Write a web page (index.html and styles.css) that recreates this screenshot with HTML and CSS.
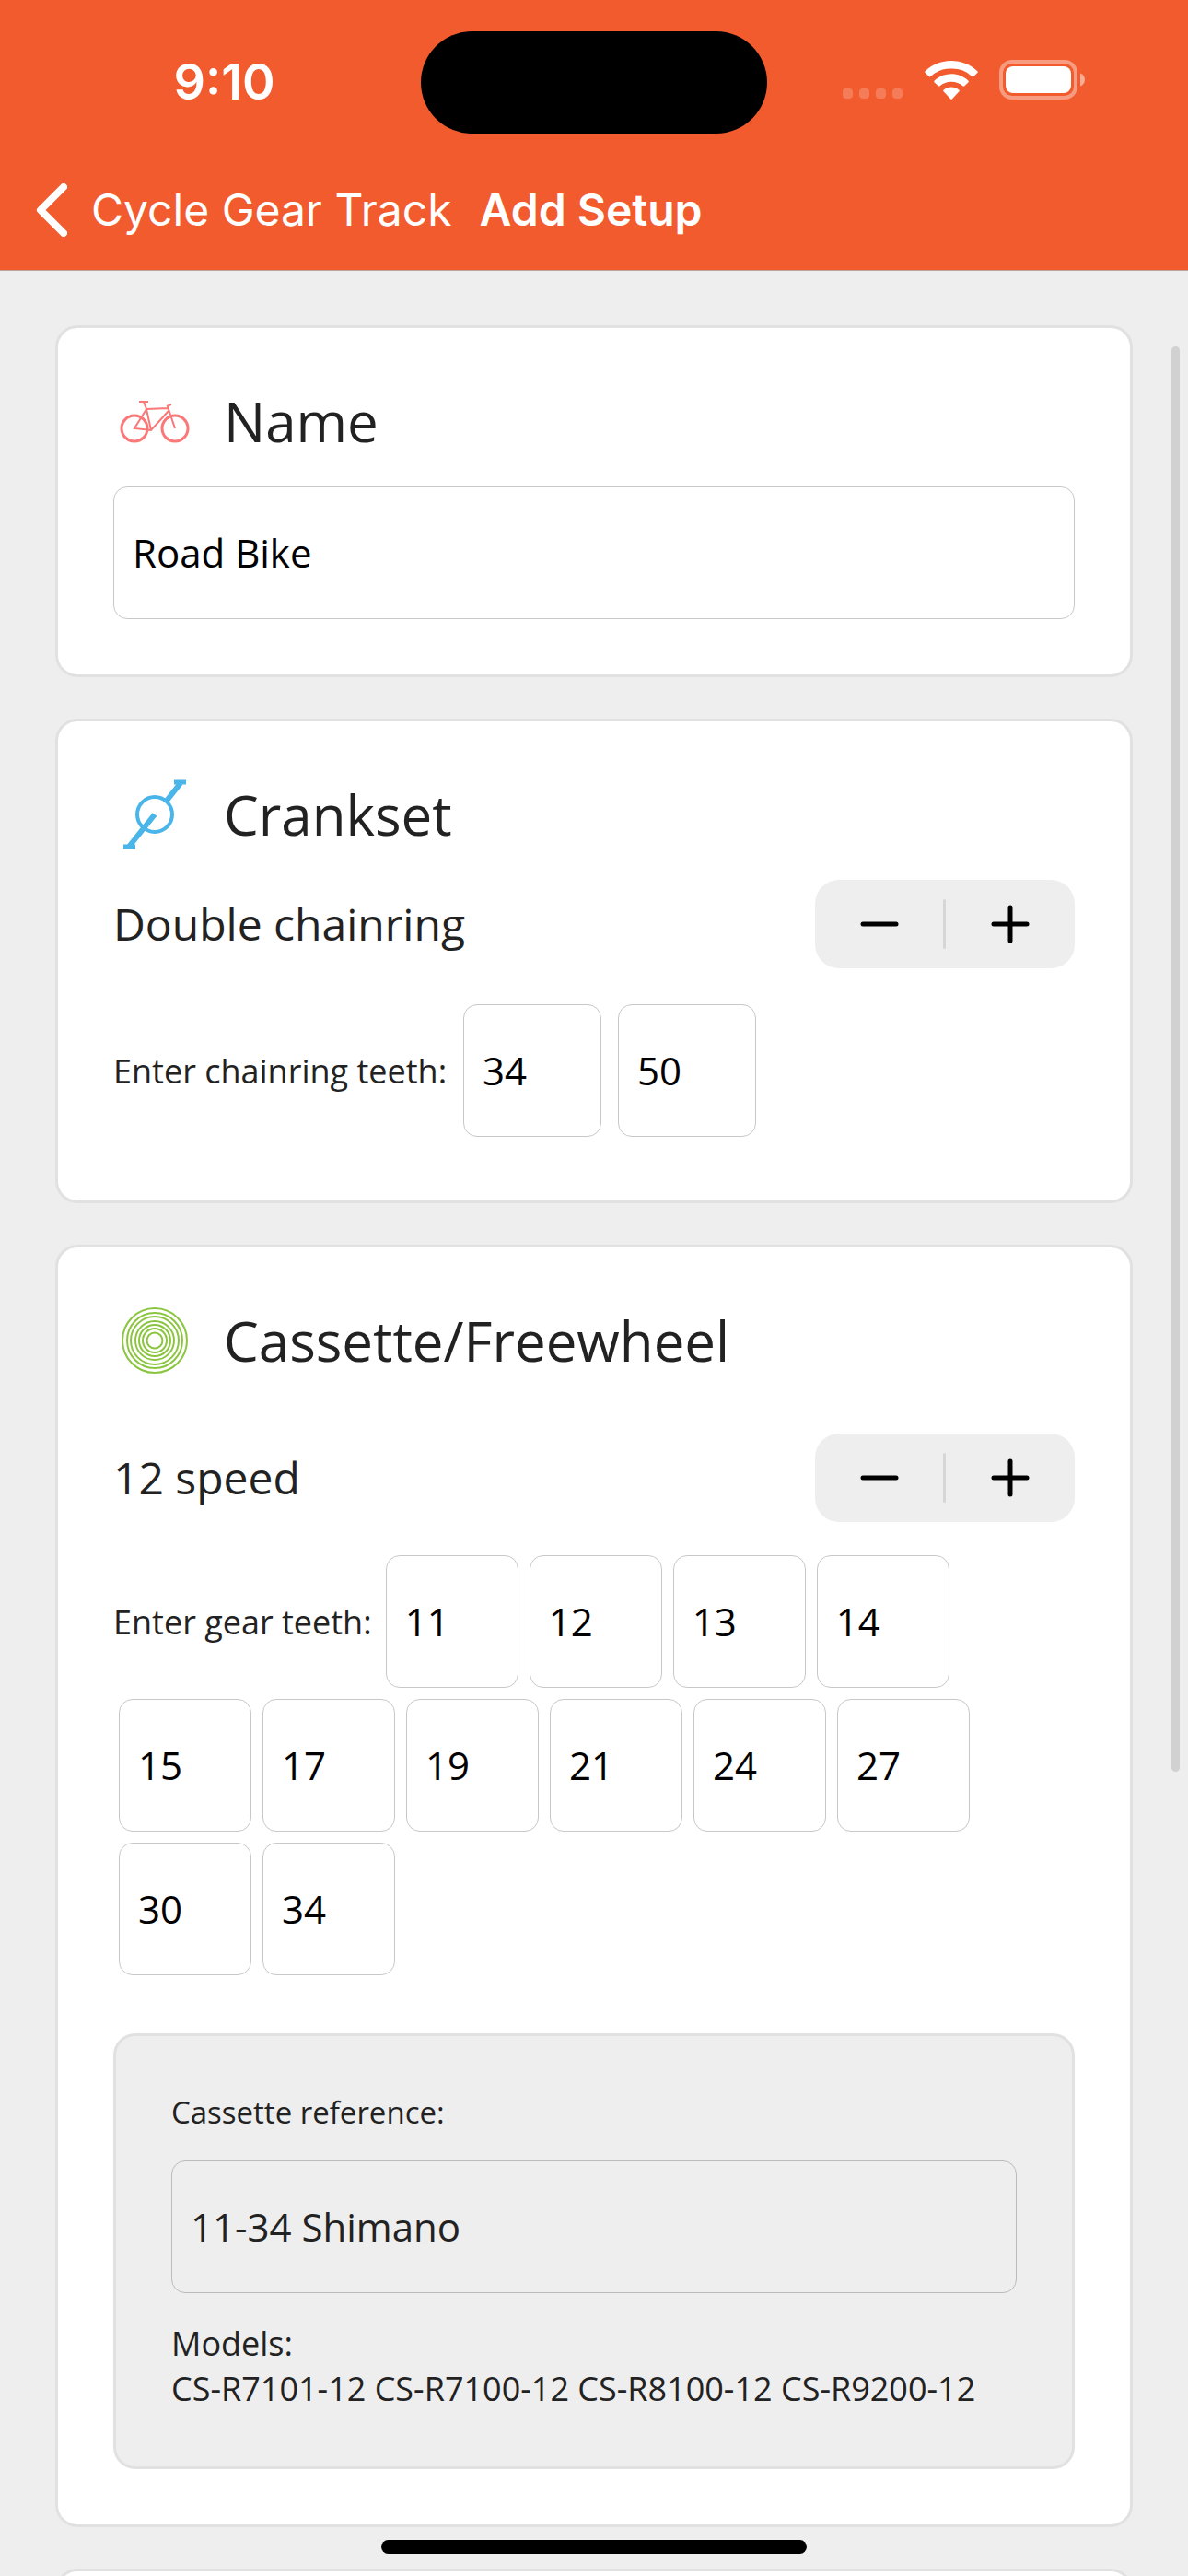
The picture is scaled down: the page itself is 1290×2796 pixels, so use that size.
FILE: index.html
```html
<!DOCTYPE html>
<html lang="en">
<head>
  <meta charset="UTF-8">
  <meta name="viewport" content="width=device-width, initial-scale=1.0">
  <title>Add Setup - Cycle Gear Track</title>
  <link rel="stylesheet" href="styles.css">
</head>
<body>
  <div class="app">
    <header class="header">
      <div class="status-bar">
        <div class="status-time">9:10</div>
        <div class="island"></div>
        <div class="status-icons">
          <svg class="icon-signal" viewBox="0 0 66 12" aria-hidden="true">
            <rect x="0" y="0" width="11" height="11" rx="4"/>
            <rect x="18" y="0" width="11" height="11" rx="4"/>
            <rect x="36" y="0" width="11" height="11" rx="4"/>
            <rect x="54" y="0" width="11" height="11" rx="4"/>
          </svg>
          <svg class="icon-wifi" viewBox="0 0 58 42" aria-hidden="true">
            <path d="M29 0C40 0 50 4 57.300 11.200a1.300 1.300 0 0 1 0 1.900L53.400 17a1.400 1.400 0 0 1-1.900 0A32 32 0 0 0 29 8.600 32 32 0 0 0 6.500 17a1.400 1.400 0 0 1-1.900 0L.700 13.100a1.300 1.300 0 0 1 0-1.900C8 4 18 0 29 0z"/>
            <path d="M29 14.300c7 0 13.500 2.700 18.300 7.100a1.400 1.400 0 0 1 0 2l-4 3.900a1.400 1.400 0 0 1-1.900 0A18.400 18.400 0 0 0 29 22.700a18.400 18.400 0 0 0-12.400 4.600 1.400 1.400 0 0 1-1.900 0l-4-3.900a1.400 1.400 0 0 1 0-2C15.500 17 22 14.300 29 14.300z"/>
            <path d="M29 28.500c3.200 0 6 1.100 8.200 2.900a1.400 1.400 0 0 1 0 2.100L30 41.200a1.400 1.400 0 0 1-2 0l-7.200-7.700a1.400 1.400 0 0 1 0-2.100c2.200-1.800 5-2.900 8.200-2.900z"/>
          </svg>
          <svg class="icon-battery" viewBox="0 0 94 43" aria-hidden="true">
            <rect class="battery-shell" x="2" y="2" width="81" height="39" rx="12"/>
            <rect x="7" y="7" width="71" height="29" rx="8"/>
            <path class="battery-cap" d="M88 14.500c3 1 5 4 5 7s-2 6-5 7z"/>
          </svg>
        </div>
      </div>
      <nav class="nav-bar">
        <a class="back-link" href="#">
          <svg class="icon-back" viewBox="0 0 34 58" aria-hidden="true">
            <path d="M30 4L5 29L30 54"/>
          </svg>
          <span>Cycle Gear Track</span>
        </a>
        <h1 class="nav-title">Add Setup</h1>
      </nav>
    </header>

    <main class="content">
      <section class="card">
        <h2 class="card-title">
          <svg class="icon-bike" viewBox="0 0 90 80" aria-hidden="true">
            <circle class="wheel" cx="23" cy="48" r="14"/>
            <circle class="wheel" cx="67" cy="48" r="14"/>
            <path d="M28 19h10M33 19l3 8M36 27l24-1M36 27L23 48l18 2L60 29M36 27l5 23M67 48l-8-24M58 24l5-2"/>
          </svg>
          <label for="setup-name">Name</label>
        </h2>
        <input class="field" id="setup-name" type="text" value="Road Bike">
      </section>

      <section class="card">
        <h2 class="card-title">
          <svg class="icon-crank" viewBox="0 0 90 80" aria-hidden="true">
            <circle cx="45" cy="40" r="19"/>
            <path class="arm" d="M45 40L17 75M58 25l15-19"/>
            <path class="pedal" d="M11 75h13M66 5h13"/>
          </svg>
          <span>Crankset</span>
        </h2>
        <div class="stepper-row">
          <span class="stepper-label">Double chainring</span>
          <div class="stepper">
            <button type="button" aria-label="Fewer chainrings">
              <svg viewBox="0 0 42 42" aria-hidden="true"><path d="M3 21h36"/></svg>
            </button>
            <button type="button" aria-label="More chainrings">
              <svg viewBox="0 0 42 42" aria-hidden="true"><path d="M3 21h36M21 3v36"/></svg>
            </button>
          </div>
        </div>
        <div class="teeth chainring-teeth">
          <label for="ring-1">Enter chainring teeth:</label>
          <input class="field" id="ring-1" type="text" inputmode="numeric" value="34">
          <input class="field" type="text" inputmode="numeric" aria-label="Chainring 2" value="50">
        </div>
      </section>

      <section class="card">
        <h2 class="card-title">
          <svg class="icon-cassette" viewBox="0 0 90 80" aria-hidden="true">
            <circle cx="45" cy="40" r="35"/>
            <circle cx="45" cy="40" r="30"/>
            <circle cx="45" cy="40" r="26"/>
            <circle cx="45" cy="40" r="21"/>
            <circle cx="45" cy="40" r="17"/>
            <circle cx="45" cy="40" r="13"/>
            <circle cx="45" cy="40" r="8.500"/>
          </svg>
          <span>Cassette/Freewheel</span>
        </h2>
        <div class="stepper-row speed-row">
          <span class="stepper-label">12 speed</span>
          <div class="stepper">
            <button type="button" aria-label="Fewer gears">
              <svg viewBox="0 0 42 42" aria-hidden="true"><path d="M3 21h36"/></svg>
            </button>
            <button type="button" aria-label="More gears">
              <svg viewBox="0 0 42 42" aria-hidden="true"><path d="M3 21h36M21 3v36"/></svg>
            </button>
          </div>
        </div>
        <div class="teeth gear-teeth">
          <label for="gear-1">Enter gear teeth:</label>
          <input class="field" id="gear-1" type="text" inputmode="numeric" value="11">
          <input class="field" type="text" inputmode="numeric" aria-label="Gear 2" value="12">
          <input class="field" type="text" inputmode="numeric" aria-label="Gear 3" value="13">
          <input class="field" type="text" inputmode="numeric" aria-label="Gear 4" value="14">
          <input class="field" type="text" inputmode="numeric" aria-label="Gear 5" value="15">
          <input class="field" type="text" inputmode="numeric" aria-label="Gear 6" value="17">
          <input class="field" type="text" inputmode="numeric" aria-label="Gear 7" value="19">
          <input class="field" type="text" inputmode="numeric" aria-label="Gear 8" value="21">
          <input class="field" type="text" inputmode="numeric" aria-label="Gear 9" value="24">
          <input class="field" type="text" inputmode="numeric" aria-label="Gear 10" value="27">
          <input class="field" type="text" inputmode="numeric" aria-label="Gear 11" value="30">
          <input class="field" type="text" inputmode="numeric" aria-label="Gear 12" value="34">
        </div>

        <div class="reference">
          <label class="reference-label" for="cassette-ref">Cassette reference:</label>
          <select class="field" id="cassette-ref">
            <option>11-34 Shimano</option>
          </select>
          <div class="models">
            <div>Models:</div>
            <div>CS-R7101-12 CS-R7100-12 CS-R8100-12 CS-R9200-12</div>
          </div>
        </div>
      </section>

      <section class="card"></section>
    </main>

    <div class="scroll-thumb"></div>
    <div class="home-indicator"></div>
  </div>
</body>
</html>
```
FILE: styles.css
```css
* {
  box-sizing: border-box;
}
body {
  margin: 0;
  font-family: "Open Sans", sans-serif;
  font-size: 36px;
  color: #222;
  background: #eee;
}
.app {
  position: relative;
  display: flex;
  flex-direction: column;
  height: 100vh;
  overflow: hidden;
}

/* header */
.header {
  flex: none;
  background: #f25b2e;
  color: #fff;
  font-family: Inter, sans-serif;
  border-bottom: 1px solid #b9a59e;
}
.status-bar {
  display: grid;
  grid-template-columns: 1fr 376px 1fr;
  align-items: center;
  height: 178px;
}
.status-time {
  padding-left: 30px;
  font-size: 54px;
  font-weight: 600;
  line-height: 60px;
  text-align: center;
}
.island {
  height: 111px;
  border-radius: 56px;
  background: #000;
}
.status-icons {
  display: flex;
  align-items: flex-end;
  justify-content: center;
  gap: 23px;
  padding: 0 30px 5px 0;
}
.status-icons svg {
  fill: #fff;
}
.icon-signal {
  width: 66px;
  height: 12px;
  opacity: 0.2;
}
.icon-wifi {
  width: 58px;
  height: 42px;
}
.icon-battery {
  width: 94px;
  height: 43px;
}
.icon-battery .battery-shell {
  fill: none;
  stroke: #fff;
  stroke-width: 4;
  opacity: 0.4;
}
.icon-battery .battery-cap {
  opacity: 0.5;
}
.nav-bar {
  display: flex;
  align-items: center;
  height: 115px;
  padding: 0 39px 16px;
  font-size: 48px;
  line-height: 60px;
}
.back-link {
  display: flex;
  align-items: center;
  gap: 26px;
  color: #fff;
  text-decoration: none;
}
.icon-back {
  width: 34px;
  height: 58px;
  fill: none;
  stroke: #fff;
  stroke-width: 8;
  stroke-linecap: round;
  stroke-linejoin: round;
}
.nav-title {
  margin: 0 0 0 30px;
  font-size: 48px;
  font-weight: 600;
}

/* cards */
.content {
  flex: 1;
  display: flex;
  flex-direction: column;
  gap: 45px;
  padding: 59px 60px 0;
  overflow: hidden;
}
.card {
  flex: none;
  padding: 60px;
  background: #fff;
  border: 3px solid #e1e1e1;
  border-radius: 24px;
}
.card-title {
  display: flex;
  align-items: center;
  gap: 30px;
  margin: 0 0 30px;
  font-size: 60px;
  font-weight: 400;
  line-height: 82px;
}
.card-title svg {
  width: 90px;
  height: 80px;
  fill: none;
  overflow: visible;
}
.icon-bike {
  stroke: #fa7878;
  stroke-width: 2;
}
.icon-bike .wheel {
  stroke-width: 3;
}
.icon-crank {
  stroke: #4ab5e9;
  stroke-width: 4;
}
.icon-crank .arm {
  stroke-width: 6;
}
.icon-crank .pedal {
  stroke-width: 5;
}
.icon-cassette {
  stroke: #8bc53f;
  stroke-width: 2;
}

/* form fields */
.field {
  display: block;
  width: 100%;
  height: 144px;
  margin: 0;
  padding: 0 20px 2px;
  border: 1px solid #c8c8c8;
  border-radius: 15px;
  background: #fff;
  color: #000;
  font-family: inherit;
  font-size: 42px;
}
select.field {
  appearance: none;
  border-color: #bbb;
  background: #eee;
  color: #222;
}
.stepper-row {
  display: flex;
  align-items: center;
  justify-content: space-between;
  margin-bottom: 30px;
}
.speed-row {
  margin-top: 60px;
}
.stepper-label {
  font-size: 48px;
  line-height: 66px;
}
.stepper {
  position: relative;
  display: flex;
  gap: 3px;
  width: 282px;
  height: 96px;
  border-radius: 26px;
  background: #eee;
}
.stepper button {
  flex: 1;
  display: flex;
  align-items: center;
  justify-content: center;
  padding: 0;
  border: 0;
  background: none;
}
.stepper button + button::before {
  content: "";
  position: absolute;
  left: 139px;
  width: 3px;
  height: 54px;
  border-radius: 2px;
  background: #d6d6d6;
}
.stepper svg {
  width: 42px;
  height: 42px;
  stroke: #000;
  stroke-width: 5;
  stroke-linecap: round;
}
.teeth {
  display: flex;
  flex-wrap: wrap;
  align-items: center;
  line-height: 49px;
}
.teeth label {
  margin-right: 9px;
}
.chainring-teeth .field {
  width: 150px;
  margin: 9px;
}
.gear-teeth .field {
  width: 144px;
  margin: 6px;
}

/* cassette reference */
.reference {
  margin-top: 57px;
  padding: 60px;
  background: #eee;
  border: 3px solid #e1e1e1;
  border-radius: 24px;
}
.reference-label {
  display: block;
  margin-bottom: 30px;
  font-size: 33px;
  line-height: 45px;
}
.models {
  margin-top: 30px;
  line-height: 49px;
}

/* overlays */
.scroll-thumb {
  position: absolute;
  top: 376px;
  right: 9px;
  width: 9px;
  height: 1547px;
  border-radius: 5px;
  background: #d1d1d1;
}
.home-indicator {
  position: absolute;
  bottom: 24px;
  left: 50%;
  width: 462px;
  height: 15px;
  margin-left: -231px;
  border-radius: 8px;
  background: #000;
}
```
